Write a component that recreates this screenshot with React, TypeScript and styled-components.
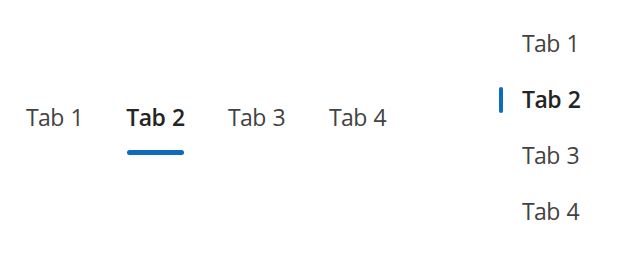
import React from "react";
import styled, { createGlobalStyle } from "styled-components";

const Global = createGlobalStyle`
  html, body { margin: 0; padding: 0; background: #ffffff; }
  body { font-family: "Open Sans", "Noto Sans", "Liberation Sans", sans-serif; }
`;

const Page = styled.div`
  display: flex;
  align-items: flex-start;
  width: 630px;
  height: 261px;
  box-sizing: border-box;
  padding-left: 4px;
`;

const HList = styled.div`
  display: flex;
  flex-direction: row;
  margin-top: 100.5px;
`;

const HTab = styled.div`
  width: 101px;
  display: flex;
  flex-direction: column;
  align-items: center;
  gap: 16.5px;
`;

const Label = styled.span<{ $selected: boolean }>`
  font-size: 23px;
  line-height: 33px;
  letter-spacing: -0.6px;
  word-spacing: 1.5px;
  white-space: nowrap;
  font-weight: ${(p) => (p.$selected ? 600 : 400)};
  color: ${(p) => (p.$selected ? "#242424" : "#424242")};
`;

const HIndicator = styled.span<{ $selected: boolean }>`
  display: block;
  width: 57px;
  height: 4.5px;
  border-radius: 3px;
  background: ${(p) => (p.$selected ? "#0f6cbd" : "transparent")};
`;

const VList = styled.div`
  display: flex;
  flex-direction: column;
  margin-top: 15.5px;
  margin-left: 90.5px;
`;

const VTab = styled.div`
  height: 56px;
  display: flex;
  flex-direction: row;
  align-items: center;
  gap: 19px;
`;

const VIndicator = styled.span<{ $selected: boolean }>`
  display: block;
  width: 4.5px;
  height: 26px;
  border-radius: 3px;
  background: ${(p) => (p.$selected ? "#0f6cbd" : "transparent")};
`;

const tabs = ["Tab 1", "Tab 2", "Tab 3", "Tab 4"];

export default function App() {
  const selected = 1;
  return (
    <>
      <Global />
      <Page>
        <HList role="tablist">
          {tabs.map((t, i) => (
            <HTab key={t} role="tab" aria-selected={i === selected}>
              <Label $selected={i === selected}>{t}</Label>
              <HIndicator $selected={i === selected} />
            </HTab>
          ))}
        </HList>
        <VList role="tablist" aria-orientation="vertical">
          {tabs.map((t, i) => (
            <VTab key={t} role="tab" aria-selected={i === selected}>
              <VIndicator $selected={i === selected} />
              <Label $selected={i === selected}>{t}</Label>
            </VTab>
          ))}
        </VList>
      </Page>
    </>
  );
}
